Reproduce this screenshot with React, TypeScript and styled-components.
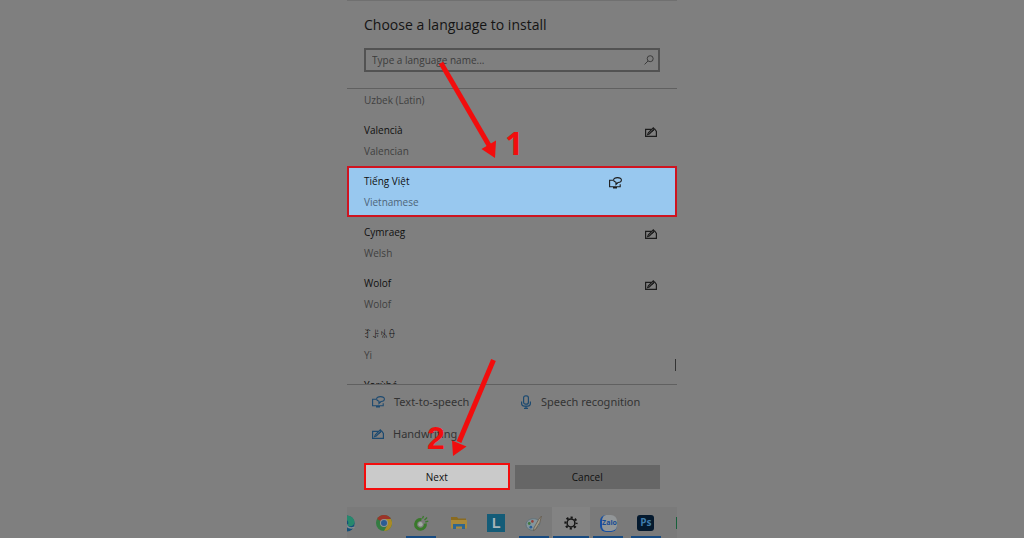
import React from "react";
import styled, { createGlobalStyle } from "styled-components";

const red = "#f20d0d";

const GlobalStyle = createGlobalStyle`
  * { box-sizing: border-box; }
  body {
    margin: 0;
    background: #7f7f7f;
    color: #141414;
    font-family: "Open Sans", "Noto Sans", sans-serif;
    font-size: 10px;
    line-height: 20px;
  }
`;

const Panel = styled.main`
  display: flex;
  flex-direction: column;
  width: 100%;
  max-width: 330px;
  height: 100vh;
  margin: 0 auto;
  border-top: 1px solid #707070;
  overflow: hidden;
`;

const Header = styled.header`
  position: relative;
  padding: 12px 17px 16px;
  border-bottom: 1px solid #606060;
`;

const Title = styled.h1`
  margin: 0 0 12px;
  font-size: 14px;
  font-weight: 400;
  line-height: 23px;
`;

const SearchBox = styled.label`
  display: flex;
  align-items: center;
  height: 24px;
  padding: 0 4px 0 6px;
  border: 2px solid #525252;
`;

const SearchInput = styled.input`
  flex: 1;
  min-width: 0;
  padding: 0;
  border: 0;
  outline: 0;
  background: transparent;
  color: #141414;
  font: inherit;
  &::placeholder {
    color: #3c3c3c;
    opacity: 1;
  }
`;

const List = styled.ul`
  position: relative;
  flex: 1;
  min-height: 0;
  margin: 0;
  padding: 0;
  list-style: none;
  overflow: hidden;
`;

const Row = styled.li<{ $selected?: boolean; $partial?: boolean }>`
  display: flex;
  justify-content: space-between;
  padding: ${(p) => (p.$partial ? "1px 20px 5px 17px" : p.$selected ? "3px 18px 3px 15px" : "5px 20px 5px 17px")};
  border: ${(p) => (p.$selected ? "2px solid #cf1420" : "0")};
  background: ${(p) => (p.$selected ? "#98c8ef" : "transparent")};
`;

const Native = styled.div`
  color: #101010;
  font-weight: 500;
  line-height: 21px;
`;

const English = styled.div<{ $selected?: boolean }>`
  color: ${(p) => (p.$selected ? "#4d6478" : "#404040")};
`;

const Features = styled.div`
  display: grid;
  grid-template-columns: 12px 12px;
  column-gap: 24px;
  padding-top: 6px;
  color: #1c1c1c;
`;

const Slot = styled.span`
  line-height: 0;
`;

const ScrollThumb = styled.span`
  position: absolute;
  right: 1px;
  bottom: 13px;
  width: 1px;
  height: 12px;
  background: #333;
`;

const Footer = styled.footer`
  position: relative;
  padding: 5px 17px 17px;
  border-top: 1px solid #606060;
`;

const Legend = styled.div`
  display: grid;
  grid-template-columns: 1fr 1fr;
  gap: 8px;
  padding-left: 8px;
  margin-bottom: 17px;
`;

const LegendItem = styled.div`
  display: flex;
  align-items: center;
  gap: 9px;
  height: 24px;
  color: #333;
  font-family: "Noto Sans", sans-serif;
  font-size: 11px;
  svg { color: #1d4a70; }
`;

const Actions = styled.div`
  display: grid;
  grid-template-columns: 1fr 1fr;
  align-items: center;
  column-gap: 5px;
`;

const Button = styled.button<{ $primary?: boolean }>`
  height: ${(p) => (p.$primary ? "27px" : "24px")};
  padding: 0;
  border: ${(p) => (p.$primary ? `2px solid ${red}` : "0")};
  background: ${(p) => (p.$primary ? "#cacaca" : "#666")};
  color: #101010;
  font: inherit;
`;

const Taskbar = styled.nav`
  height: 31px;
  background: #7a7a7a;
`;

const Apps = styled.div`
  display: grid;
  grid-template-columns: repeat(10, 1fr);
  width: 374px;
  height: 100%;
  margin-left: -19px;
`;

const TaskButton = styled.button<{ $open?: boolean; $active?: boolean }>`
  display: flex;
  align-items: center;
  justify-content: center;
  padding: 1px 0 0;
  border: 0;
  background:
    linear-gradient(${(p) => (p.$open ? "#174a80, #174a80" : "transparent, transparent")}) center bottom / ${(p) => (p.$active ? "36px" : "30px")} 2px no-repeat
    ${(p) => (p.$active ? "#838383" : "transparent")};
`;

const Annotation = styled.svg<{ $left: number; $top: number }>`
  position: absolute;
  z-index: 2;
  left: ${(p) => p.$left}px;
  top: ${(p) => p.$top}px;
  pointer-events: none;
`;

const StepNumber = styled.span<{ $left: number; $top: number; $family: string }>`
  position: absolute;
  z-index: 2;
  left: ${(p) => p.$left}px;
  top: ${(p) => p.$top}px;
  color: ${red};
  font: bold 32px/32px "${(p) => p.$family}", sans-serif;
`;

const PenIcon = () => (
  <svg width="12" height="12" viewBox="0 0 12 12" fill="none" stroke="currentColor">
    <path d="M6.500 3.300H.6v7h10.800V5.500L9.700 3" strokeWidth="1.200" />
    <path d="M2.600 8.600 3.300 6.900 8.300 1.900 9.400 3 4.300 8z" strokeWidth="1.100" />
    <path d="M7.400 5.600 9.200 3.600" strokeWidth="1" />
  </svg>
);

const SpeechIcon = () => (
  <svg width="13" height="12" viewBox="0 0 13 12" fill="none" stroke="currentColor" strokeWidth="1.100">
    <path d="M4.200 3.200H.6v6.600h10.600V7.200M4 10.900h4" />
    <path d="M4.600 3C4.600 1.600 6.200.6 8.500.6s3.900 1 3.900 2.400-1.500 2.500-3.400 2.500L7 7.500V5.300C5.600 4.900 4.600 4.100 4.600 3z" />
  </svg>
);

const MicIcon = () => (
  <svg width="12" height="14" viewBox="0 0 12 14" fill="none" stroke="currentColor" strokeWidth="1.2">
    <rect x="3.6" y=".8" width="4.8" height="8.4" rx="2" />
    <path d="M1.6 6.4v2.2c0 1.6 1 2.5 2.6 2.5h3.6c1.6 0 2.6-.9 2.6-2.5V6.4M6 11v2.4M4 13.3h4" />
  </svg>
);

const SearchIcon = () => (
  <svg width="10" height="10" viewBox="0 0 10 10" fill="none" stroke="#3c3c3c">
    <circle cx="6.2" cy="3.7" r="3" />
    <path d="M4 6 .6 9.4" />
  </svg>
);

const EdgeIcon = () => (
  <svg width="17" height="17" viewBox="0 0 16 16">
    <circle cx="8" cy="8" r="7.6" fill="#154f78" />
    <path d="M.6 7C1.2 2.8 4.2.4 8 .4c4.6 0 7.6 3.2 7.6 6.3 0 2.5-1.8 4-4 4-1.6 0-2.6-.6-2.6-1.2 0-.5.7-.8.7-2C9.700 5 7.400 4 5.200 4 3 4 1.300 5.300.6 7z" fill="#27886d" />
    <path d="M8 8.500c0 3.200 3.500 4.600 7.500 3" fill="none" stroke="#858d90" strokeWidth="1.500" />
  </svg>
);

const ChromeIcon = () => (
  <svg width="16" height="16" viewBox="0 0 16 16">
    <circle cx="8" cy="8" r="8" fill="#347b42" />
    <path d="M8 8 1.070 4A8 8 0 0 1 14.930 4z" fill="#9c3429" />
    <path d="M8 4h6.930A8 8 0 0 1 8 16l3.460-6z" fill="#a98a25" />
    <circle cx="8" cy="8" r="4" fill="#929292" />
    <circle cx="8" cy="8" r="3" fill="#2b5c93" />
  </svg>
);

const CocCocIcon = () => (
  <svg width="16" height="16" viewBox="0 0 16 16" fill="none">
    <path d="M8.500 4.600A4.900 4.900 0 1 0 12.300 8.500" stroke="#39792b" strokeWidth="3" />
    <circle cx="7.500" cy="9.300" r="2.200" fill="#a0aaa0" />
    <path d="M9.500 3.500 10.500 1M11.500 5l2.600-2.500M12.300 7l3-.8" stroke="#39792b" strokeWidth="1.300" />
  </svg>
);

const FolderIcon = () => (
  <svg width="16" height="14" viewBox="0 0 16 14">
    <path d="M0 1h6l1.200 1.500H15V12H0z" fill="#8a6b20" />
    <path d="M0 4h16v8.500H0z" fill="#a8893c" />
    <path d="M2 8h12v5h-3v-2.500H5V13H2z" fill="#2e6690" />
  </svg>
);

const LTile = styled.span`
  width: 18px;
  height: 18px;
  background: #145c78;
  color: #a8b4b8;
  font: bold 14px/18px "Liberation Sans", sans-serif;
`;

const PsTile = styled.span`
  width: 17px;
  height: 16px;
  border-radius: 3px;
  background: #04192e;
  color: #3f7bab;
  font: bold 10px/15px "Open Sans", sans-serif;
`;

const ZaloTile = styled.span`
  width: 17px;
  height: 17px;
  border: 1px solid #174fa0;
  border-width: 0 0 1px 2px;
  border-radius: 6px;
  background: #929698;
  color: #174c94;
  font: bold 7px/16px "Open Sans", sans-serif;
`;

const PaintIcon = () => (
  <svg width="18" height="17" viewBox="0 0 17 16">
    <path d="M1 9C1 5.500 4.500 3.500 8 3.500s6 1.500 6 4.500-2.500 3-3.500 4.500S7.500 15 5 14s-4-2.500-4-5z" fill="#84959c" stroke="#5c6f78" strokeWidth=".8" />
    <circle cx="4" cy="8" r="1.300" fill="#3e7840" />
    <circle cx="7" cy="6" r="1.200" fill="#963e35" />
    <circle cx="5.500" cy="11.500" r="1.300" fill="#285d95" />
    <path d="M15.500 1 14 7l-4 6.500-2 1.200.4-2.500L13 4z" fill="#a19a88" stroke="#62584b" strokeWidth=".7" />
  </svg>
);

const GearIcon = () => (
  <svg width="14" height="14" viewBox="0 0 14 14" fill="none" stroke="#151515">
    <circle cx="7" cy="7" r="3.900" strokeWidth="1.500" />
    <circle cx="7" cy="7" r="5.600" strokeWidth="2" strokeDasharray="2.200 2.198" strokeDashoffset="1.100" />
  </svg>
);

const GreenIcon = () => (
  <svg width="15" height="14" viewBox="0 0 15 14">
    <path d="M0 1h15v12H0z" fill="#17613b" />
  </svg>
);

type Language = { native: string; english: string; speech?: boolean; pen?: boolean; selected?: boolean };

const languages: Language[] = [
  { native: "Valencià", english: "Valencian", pen: true },
  { native: "Tiếng Việt", english: "Vietnamese", speech: true, selected: true },
  { native: "Cymraeg", english: "Welsh", pen: true },
  { native: "Wolof", english: "Wolof", pen: true },
  { native: "ꆈꌠꁱꂷ", english: "Yi" },
  { native: "Yorùbá", english: "Yoruba" },
];

const apps = [
  { name: "Edge", icon: <EdgeIcon /> },
  { name: "Chrome", icon: <ChromeIcon /> },
  { name: "Cốc Cốc", icon: <CocCocIcon />, open: true },
  { name: "File Explorer", icon: <FolderIcon /> },
  { name: "L", icon: <LTile>L</LTile> },
  { name: "Paint", icon: <PaintIcon />, open: true },
  { name: "Settings", icon: <GearIcon />, open: true, active: true },
  { name: "Zalo", icon: <ZaloTile>Zalo</ZaloTile>, open: true },
  { name: "Photoshop", icon: <PsTile>Ps</PsTile>, open: true },
  { name: "Sheets", icon: <GreenIcon /> },
];

export default function App() {
  return (
    <>
      <GlobalStyle />
      <Panel>
        <Header>
          <Title>Choose a language to install</Title>
          <SearchBox>
            <SearchInput type="text" aria-label="Language name" placeholder="Type a language name..." />
            <SearchIcon />
          </SearchBox>
          <Annotation $left={86} $top={56} width="70" height="106" viewBox="0 0 70 106">
            <path d="M8 6 57 90" stroke={red} strokeWidth="5" />
            <path d="M62 101 48.500 92 63 83.500z" fill={red} />
          </Annotation>
          <StepNumber $family="Open Sans" $left={158} $top={126}>1</StepNumber>
        </Header>
        <List>
          <Row $partial>
            <English>Uzbek (Latin)</English>
          </Row>
          {languages.map((l) => (
            <Row key={l.english} $selected={l.selected}>
              <div>
                <Native>{l.native}</Native>
                <English $selected={l.selected}>{l.english}</English>
              </div>
              <Features>
                <Slot>{l.speech && <SpeechIcon />}</Slot>
                <Slot>{l.pen && <PenIcon />}</Slot>
              </Features>
            </Row>
          ))}
          <ScrollThumb />
        </List>
        <Footer>
          <Legend>
            <LegendItem><SpeechIcon />Text-to-speech</LegendItem>
            <LegendItem><MicIcon />Speech recognition</LegendItem>
            <LegendItem><PenIcon />Handwriting</LegendItem>
          </Legend>
          <Actions>
            <Button type="button" $primary>Next</Button>
            <Button type="button">Cancel</Button>
          </Actions>
          <Annotation $left={100} $top={-31} width="54" height="104" viewBox="0 0 54 104">
            <path d="M46.500 6 12 88" stroke={red} strokeWidth="5" />
            <path d="M6 102 5 86.500 19.500 92.500z" fill={red} />
          </Annotation>
          <StepNumber $family="Liberation Sans" $left={80} $top={37}>2</StepNumber>
        </Footer>
        <Taskbar aria-label="Taskbar">
          <Apps>
            {apps.map((a) => (
              <TaskButton key={a.name} type="button" aria-label={a.name} $open={a.open} $active={a.active}>
                {a.icon}
              </TaskButton>
            ))}
          </Apps>
        </Taskbar>
      </Panel>
    </>
  );
}
